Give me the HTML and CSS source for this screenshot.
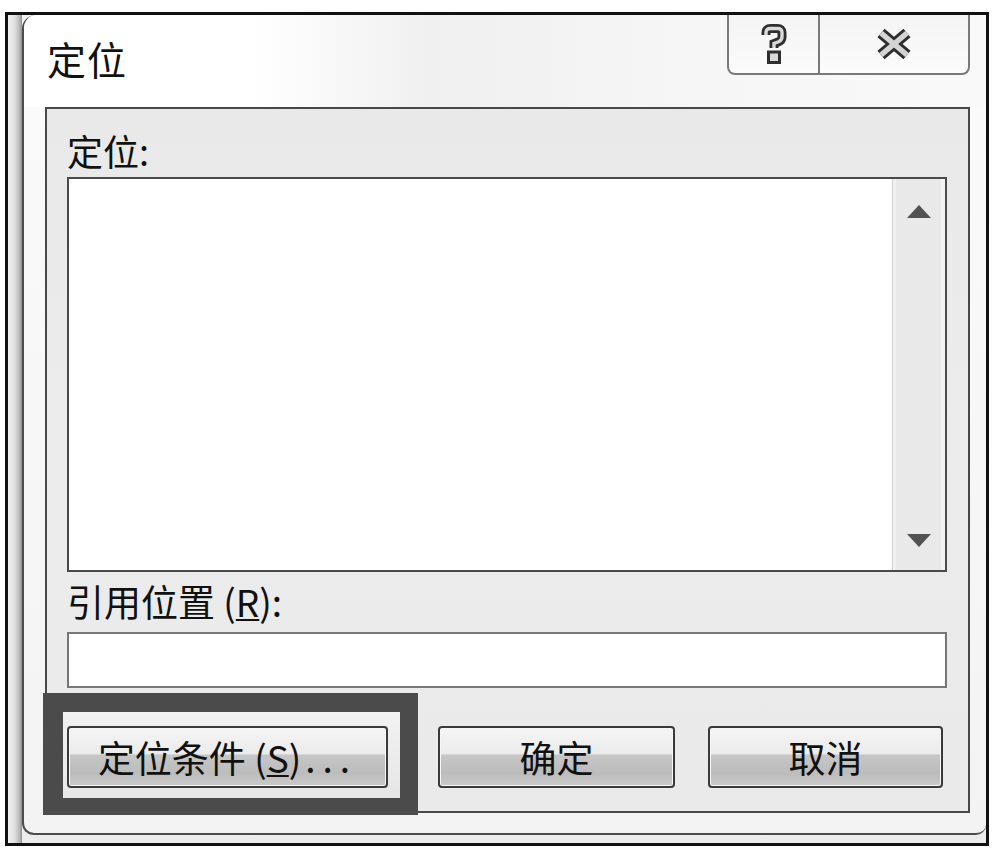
FILE: index.html
```html
<!DOCTYPE html>
<html lang="zh-CN">
<head>
<meta charset="utf-8">
<title>定位</title>
<link rel="stylesheet" href="styles.css">
</head>
<body>
<div class="frame">
  <div class="shade"></div>
  <div class="window">
    <div class="titlebar">
      <div class="title">定位</div>
      <div class="tb-btns">
        <div class="tb-help">
          <svg width="28" height="40" viewBox="0 0 28 40">
            <path d="M6 11 V8.5 Q6 4.5 10.5 4.5 H17.5 Q22 4.5 22 8.5 V13 Q22 16.5 18 18 L14 19.5 V24" fill="none" stroke="#2e2e2e" stroke-width="9" stroke-linejoin="miter"/>
            <path d="M6 11 V8.5 Q6 4.5 10.5 4.5 H17.5 Q22 4.5 22 8.5 V13 Q22 16.5 18 18 L14 19.5 V24" fill="none" stroke="#d9d9d9" stroke-width="3.4" stroke-linejoin="miter"/>
            <rect x="8.5" y="28" width="11" height="10.5" fill="#d9d9d9" stroke="#2e2e2e" stroke-width="3"/>
          </svg>
        </div>
        <div class="tb-close">
          <svg width="40" height="34" viewBox="0 0 40 34">
            <path d="M7 6 L33 28 M33 6 L7 28" stroke="#2e2e2e" stroke-width="11"/>
            <path d="M7 6 L33 28 M33 6 L7 28" stroke="#d4d4d4" stroke-width="5.5"/>
          </svg>
        </div>
      </div>
    </div>
    <div class="panel">
      <div class="label-top">定位:</div>
      <div class="listbox">
        <div class="list-area"></div>
        <div class="scrollbar">
          <span class="arrow-up"></span>
          <span class="arrow-down"></span>
        </div>
      </div>
      <div class="label-ref">引用位置 (<span class="ak">R</span>):</div>
      <div class="ref-input"></div>
      <div class="btn-row">
        <div class="btn btn-find">定位条件 (<span class="ak">S</span>)<span class="dots">...</span></div>
        <div class="btn btn-ok">确定</div>
        <div class="btn btn-cancel">取消</div>
      </div>
      <div class="highlight"></div>
    </div>
  </div>
</div>
</body>
</html>
```

FILE: styles.css
```css
html, body {
  margin: 0;
  padding: 0;
  background: #ffffff;
}

body {
  padding: 12px 0 0 5px;
  font-family: "Noto Sans CJK SC", "Noto Sans", sans-serif;
  color: #111;
}

.frame {
  box-sizing: border-box;
  width: 984px;
  height: 834px;
  border: 3px solid #111;
  background: linear-gradient(to bottom, #f4f4f4, #ececec);
  display: flex;
}

.shade {
  width: 14px;
  flex: none;
  background: linear-gradient(to right, #f2f2f2 0%, #dedede 50%, #b4b4b4 85%, #8c8c8c 100%);
}

.window {
  flex: 1;
  margin-bottom: 8px;
  border-left: 2px solid #4c4c4c;
  border-bottom: 2px solid #4c4c4c;
  border-radius: 14px 0 10px 12px;
  background: linear-gradient(to bottom, #fbfbfb, #f3f3f3);
  display: flex;
  flex-direction: column;
  overflow: hidden;
}

.titlebar {
  height: 92px;
  flex: none;
  display: flex;
  align-items: flex-start;
  background: linear-gradient(to right, #ffffff 0%, #ffffff 24%, #f0f0f0 42%, #f6f6f6 70%, #f9f9f9 100%);
}

.title {
  padding: 23px 0 0 23px;
  font-size: 39px;
  line-height: 40px;
  letter-spacing: 1px;
}

.tb-btns {
  margin-left: auto;
  margin-right: 16px;
  height: 58px;
  display: flex;
  border: 2px solid #7a7a7a;
  border-top: none;
  border-radius: 0 0 8px 8px;
  background: linear-gradient(to bottom, #f4f4f4, #fbfbfb);
}

.tb-help {
  width: 89px;
  display: flex;
  align-items: center;
  justify-content: center;
  border-right: 2px solid #7a7a7a;
}

.tb-close {
  width: 148px;
  display: flex;
  align-items: center;
  justify-content: center;
}

.panel {
  position: relative;
  margin: 0 16px 20px 21px;
  border: 2px solid #484848;
  background: linear-gradient(to bottom, #e9e9e9, #ececec 50%, #eaeaea);
  display: flex;
  flex-direction: column;
}

.label-top {
  padding: 23px 0 9px 20px;
  font-size: 36px;
  line-height: 36px;
}

.listbox {
  margin: 0 21px 0 20px;
  height: 395px;
  box-sizing: border-box;
  border: 2px solid #4a4a4a;
  background: #ffffff;
  display: flex;
}

.list-area {
  flex: 1;
}

.scrollbar {
  width: 52px;
  border-left: 1px solid #d4d4d4;
  background: #e9e9e9;
  box-shadow: inset 3px 0 0 #f1f1f1, inset -4px 0 0 #f3f3f3;
  display: flex;
  flex-direction: column;
  justify-content: space-between;
  align-items: center;
  padding: 26px 0 23px;
}

.arrow-up {
  width: 0;
  height: 0;
  border-left: 12px solid transparent;
  border-right: 12px solid transparent;
  border-bottom: 13px solid #525252;
}

.arrow-down {
  width: 0;
  height: 0;
  border-left: 12px solid transparent;
  border-right: 12px solid transparent;
  border-top: 13px solid #525252;
}

.label-ref {
  padding: 10px 0 11px 20px;
  font-size: 37px;
  line-height: 39px;
}

.ak {
  text-decoration: underline;
  text-decoration-thickness: 2px;
  text-underline-offset: 2px;
}

.ref-input {
  margin: 0 21px 0 20px;
  height: 56px;
  box-sizing: border-box;
  border: 2px solid #777;
  background: #ffffff;
}

.btn-row {
  display: flex;
  padding: 38px 0 23px 20px;
}

.btn {
  position: relative;
  z-index: 1;
  box-sizing: border-box;
  height: 62px;
  border: 2px solid #3a3a3a;
  border-radius: 4px;
  background: linear-gradient(to bottom, #f5f5f5 0%, #ebebeb 44%, #c6c6c6 47%, #bcbcbc 78%, #cbcbcb 100%);
  box-shadow: inset 0 0 0 1px #f7f7f7;
  display: flex;
  align-items: center;
  justify-content: center;
  font-size: 37px;
  line-height: 40px;
}

.btn-find {
  width: 321px;
  margin-right: 50px;
}

.btn-ok {
  width: 237px;
  margin-right: 33px;
}

.btn-cancel {
  width: 235px;
}

.dots {
  letter-spacing: 7px;
  margin-left: 4px;
}

.highlight {
  position: absolute;
  left: -4px;
  top: 584px;
  width: 375px;
  height: 122px;
  box-sizing: border-box;
  border-style: solid;
  border-color: #4b4b4b;
  border-width: 19px 18px 17px 20px;
  background: linear-gradient(to bottom, #f2f2f2, #e6e6e6);
}
```
